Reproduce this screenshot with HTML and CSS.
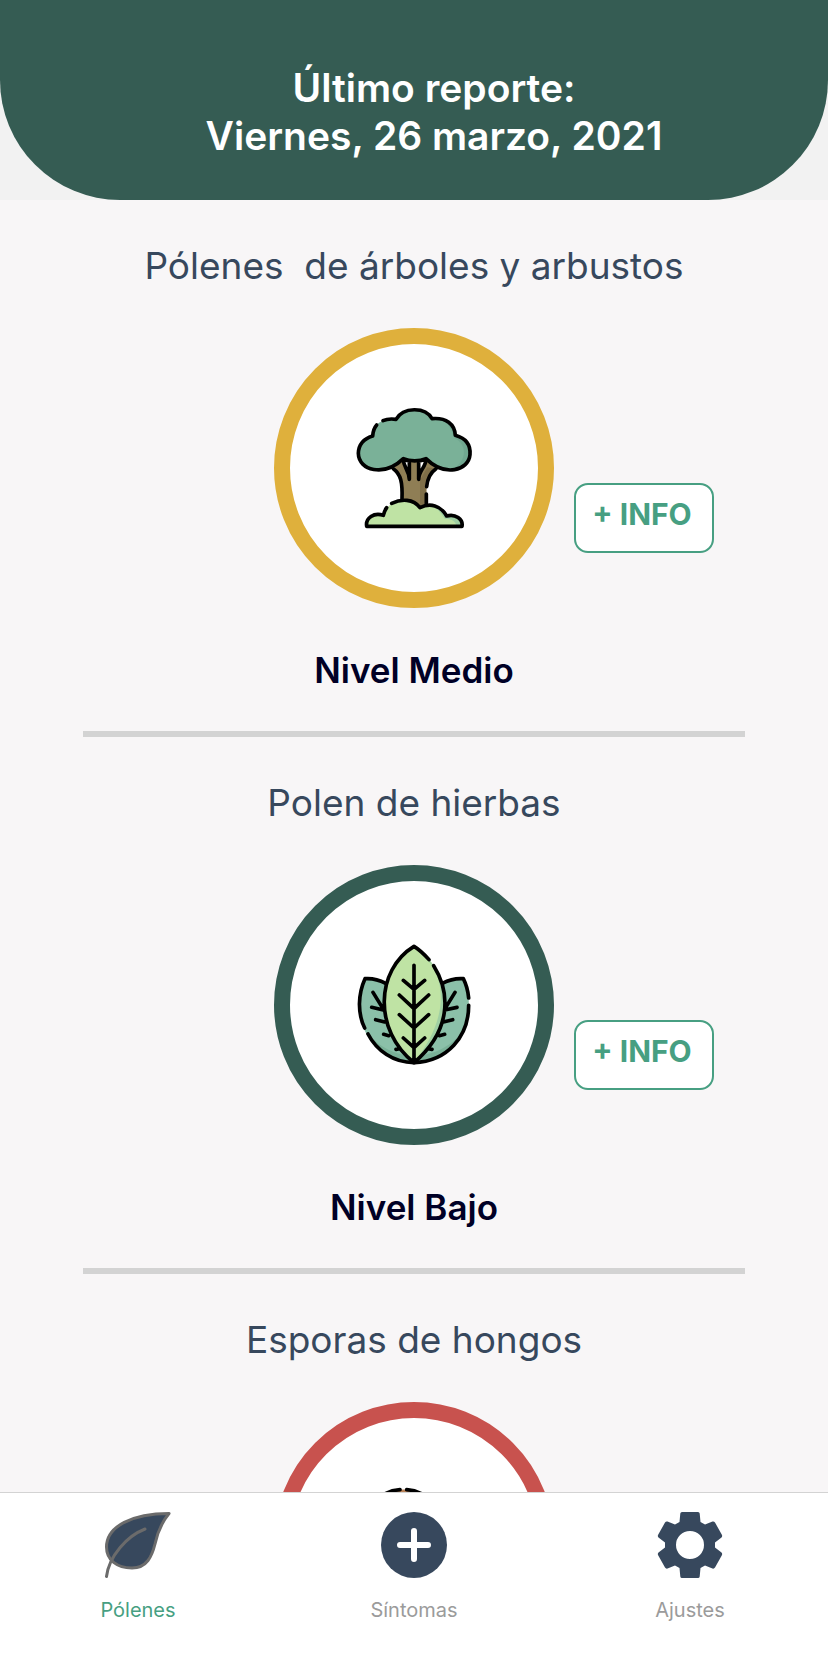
FILE: index.html
```html
<!DOCTYPE html>
<html lang="es">
<head>
<meta charset="utf-8">
<meta name="viewport" content="width=device-width, initial-scale=1">
<title>Pólenes</title>
<link rel="stylesheet" href="styles.css">
</head>
<body>
<div class="app">
  <header class="header">
    <h1 class="report">Último reporte:<br>Viernes, 26 marzo, 2021</h1>
  </header>

  <main class="content">
    <section class="pollen">
      <h2 class="pollen-title">Pólenes &nbsp;de árboles y arbustos</h2>
      <div class="pollen-row">
        <div class="ring ring-medium">
          <svg class="ring-icon" viewBox="42 54 360 360" fill="none" stroke="#000" stroke-width="11" stroke-linecap="round" stroke-linejoin="round" aria-hidden="true">
            <path fill="#8f7e55" stroke="none" d="M160 236C182 252 188 276 186 330L240 353L259 345V300C259 270 266 254 288 236L258 205L236 212H208L190 205Z"/>
            <path fill="#7f6f49" stroke="none" d="M240 270V350L259 345V300C259 270 266 254 288 236L262 232Z"/>
            <path fill="#fff" d="M190 208C190 232 207 240 208 268V214ZM258 208C258 232 237 240 236 268V214Z"/>
            <path d="M160 236C182 252 188 276 186 328M288 236C268 250 262 268 260 290M259 312V345"/>
            <path fill="#7ab198" stroke="none" d="M98 138C100 105 118 87 168 88C190 50 256 50 276 86C318 82 344 102 346 136C382 146 392 168 390 194C386 242 314 262 258 206C238 215 210 215 190 206C132 262 56 242 55 190C56 160 72 146 98 138Z"/>
            <path fill="#70a790" stroke="none" d="M310 92C336 102 346 118 346 136C382 146 392 168 390 194C386 226 354 244 322 243C372 230 390 176 350 148C334 140 342 116 310 92Z"/>
            <path d="M129 92C140 87 154 86 168 88C190 50 256 50 276 86C318 82 344 102 346 136C382 146 392 168 390 194C386 242 314 262 258 206C238 215 210 215 190 206C132 262 56 242 55 190C56 160 72 146 98 138C99 124 102 114 110 105"/>
            <path fill="#bfe3a4" stroke="none" d="M80 409C76 384 102 366 130 376C142 326 214 318 240 353C270 338 302 346 320 378C346 370 370 388 366 409Z"/>
            <path fill="#9fd0a3" stroke="none" d="M280 350C304 352 315 364 320 378C346 370 370 388 366 409H350C346 392 334 386 314 386C306 374 298 360 280 350Z"/>
            <path d="M155 340C184 326 220 326 240 353C270 338 302 346 320 378C346 370 370 388 366 409H80C76 384 102 366 130 376C132 368 135 360 140 353"/>
          </svg>
        </div>
        <button class="info" type="button">+ INFO</button>
      </div>
      <p class="level">Nivel Medio</p>
      <hr class="divider">
    </section>

    <section class="pollen">
      <h2 class="pollen-title">Polen de hierbas</h2>
      <div class="pollen-row">
        <div class="ring ring-low">
          <svg class="ring-icon" viewBox="42 45 360 360" fill="none" stroke="#000" stroke-width="11" stroke-linecap="round" stroke-linejoin="round" aria-hidden="true">
            <path fill="#8bc0a9" stroke="none" d="M222 398C120 394 58 320 59 222C60 192 64 168 75 146C98 144 118 150 137 160H307C326 150 346 144 370 146C382 170 388 196 386 222C386 320 322 394 222 398Z"/>
            <path fill="#7ab198" stroke="none" d="M222 398C164 396 112 366 84 312C112 344 148 366 190 374ZM222 398C284 396 336 366 362 312C332 346 296 366 254 374Z"/>
            <path d="M137 160C118 150 98 144 75 146C54 192 52 250 74 294M84 312C110 362 160 398 222 398C322 394 386 320 386 226M386 204C384 182 380 166 370 146C346 144 326 150 307 160"/>
            <path fill="#bfe3a4" stroke="none" d="M222 49C106 120 100 302 222 398C344 302 338 120 222 49Z"/>
            <path fill="#a0d0a3" stroke="none" d="M222 49C338 120 344 302 222 398C314 280 320 180 276 106Z"/>
            <path d="M267 89C254 74 240 60 222 49C106 120 100 302 222 398C332 304 334 192 281 107M222 106V398M190 151L222 178L254 151M178 195L222 236L266 195M178 254L222 294L266 254M190 324L222 353L254 324M99 187L129 236M95 232L130 240M107 269L134 276M131 313L146 317M168 358L178 356M345 187L315 236M351 232L314 240M338 269L310 276M314 313L298 317M276 358L266 356"/>
          </svg>
        </div>
        <button class="info" type="button">+ INFO</button>
      </div>
      <p class="level">Nivel Bajo</p>
      <hr class="divider">
    </section>

    <section class="pollen">
      <h2 class="pollen-title">Esporas de hongos</h2>
      <div class="pollen-row">
        <div class="ring ring-high">
          <svg class="ring-icon" viewBox="0 0 360 360" fill="none" stroke="#000" stroke-width="11" stroke-linecap="round" stroke-linejoin="round" aria-hidden="true">
            <path fill="#e8d3b0" d="M112 180V320Q148 350 184 320V180Z"/>
            <path fill="#b98258" stroke="none" d="M20 180C20 -30 276 -30 276 180Z"/>
            <path d="M138 23C70 28 20 90 20 180H276C276 90 226 28 158 23"/>
          </svg>
        </div>
      </div>
    </section>
  </main>

  <nav class="tabs">
    <a class="tab tab-active" href="#polenes">
      <svg class="tab-icon" viewBox="0 0 66 66" aria-hidden="true">
        <path fill="#37485d" stroke="#6b6b6b" stroke-width="3" stroke-linejoin="round" d="M64 1.500C28 1.500 1.500 14 1.500 35C1.500 48 12 56 27 56C42 56 47 44 50 32C53 18 57 10 64 1.500Z"/>
        <path fill="none" stroke="#6b6b6b" stroke-width="3" stroke-linecap="round" d="M1.500 64.500C4 44 22 24 40 17"/>
      </svg>
      <span>Pólenes</span>
    </a>
    <a class="tab" href="#sintomas">
      <svg class="tab-icon" viewBox="0 0 66 66" aria-hidden="true">
        <circle cx="33" cy="33" r="33" fill="#37485d"/>
        <path d="M33 19V47M19 33H47" fill="none" stroke="#fff" stroke-width="6" stroke-linecap="round"/>
      </svg>
      <span>Síntomas</span>
    </a>
    <a class="tab" href="#ajustes">
      <svg class="tab-icon" viewBox="0 0 66 66" aria-hidden="true">
        <path fill="#37485d" fill-rule="evenodd" d="M25 0H41Q42.500 0 42.700 1.500L43.500 10L48 12.500L55.500 9.500Q57 9 58 10.500L65 23Q65.500 24.500 64.500 25.500L58 30.500V35.500L64.500 40.500Q65.500 41.500 65 43L58 55.500Q57 57 55.500 56.500L48 53.500L43.500 56L42.700 64.500Q42.500 66 41 66H25Q23.500 66 23.300 64.500L22.500 56L18 53.500L10.500 56.500Q9 57 8 55.500L1 43Q.5 41.500 1.500 40.500L8 35.500V30.500L1.500 25.500Q.5 24.500 1 23L8 10.500Q9 9 10.500 9.500L18 12.500L22.500 10L23.300 1.500Q23.500 0 25 0ZM33 19A14 14 0 1 0 33 47A14 14 0 1 0 33 19Z"/>
      </svg>
      <span>Ajustes</span>
    </a>
  </nav>
</div>
</body>
</html>
```
FILE: styles.css
```css
* {
  box-sizing: border-box;
}

body {
  margin: 0;
  background: #f2f2f2;
  font-family: Inter, "Liberation Sans", sans-serif;
}

.app {
  display: flex;
  flex-direction: column;
  height: 100vh;
}

.header {
  flex: none;
  padding: 64px 0 40px 40px;
  border-radius: 0 0 120px 120px;
  background: #355c53;
  color: #fff;
  text-align: center;
}

.report {
  margin: 0;
  font-size: 39px;
  font-weight: 600;
  line-height: 48px;
}

.content {
  flex: 1;
  min-height: 0;
  overflow: hidden;
  background: #f8f6f7;
}

.pollen {
  padding-top: 42px;
}

.pollen-title {
  margin: 0 0 38px;
  color: #37485d;
  font-size: 37px;
  font-weight: 400;
  line-height: 48px;
  text-align: center;
}

.pollen-row {
  display: grid;
  grid-template-columns: 1fr auto 1fr;
}

.ring {
  display: flex;
  grid-column: 2;
  align-items: center;
  justify-content: center;
  width: 280px;
  height: 280px;
  border: 16px solid;
  border-radius: 50%;
  background: #fff;
}

.ring-medium {
  border-color: #dfb03c;
}

.ring-low {
  border-color: #355c53;
}

.ring-high {
  border-color: #c8524e;
}

.ring-icon {
  width: 120px;
  height: 120px;
  overflow: visible;
}

.info {
  align-self: end;
  justify-self: start;
  width: 140px;
  height: 70px;
  margin: 0 0 55px 20px;
  padding: 0 4px 8px 0;
  border: 2px solid #479f82;
  border-radius: 14px;
  background: #fff;
  color: #479f82;
  font-family: inherit;
  font-size: 30px;
  font-weight: 700;
}

.level {
  margin: 41px 0 39px;
  color: #000026;
  font-size: 35px;
  font-weight: 600;
  line-height: 43px;
  text-align: center;
}

.divider {
  width: 80%;
  height: 6px;
  margin: 0 auto;
  border: 0;
  background: #d3d3d3;
}

.tabs {
  display: flex;
  flex: none;
  padding: 19px 0 48px;
  border-top: 1px solid #d3d3d3;
  background: #fff;
}

.tab {
  display: flex;
  flex: 1;
  flex-direction: column;
  align-items: center;
  gap: 20px;
  color: #9b9b9b;
  font-size: 20px;
  line-height: 24px;
  text-decoration: none;
}

.tab-active {
  color: #479f82;
}

.tab-icon {
  width: 66px;
  height: 66px;
}
```
